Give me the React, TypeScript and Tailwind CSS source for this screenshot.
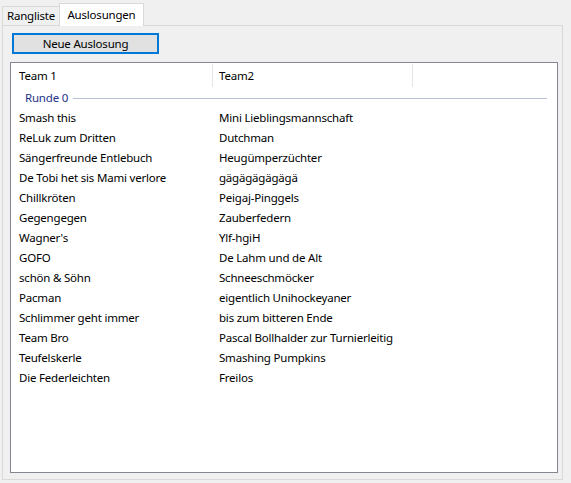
import React from "react";

const rows: [string, string][] = [
  ["Smash this", "Mini Lieblingsmannschaft"],
  ["ReLuk zum Dritten", "Dutchman"],
  ["Sängerfreunde Entlebuch", "Heugümperzüchter"],
  ["De Tobi het sis Mami verlore", "gägägägägägä"],
  ["Chillkröten", "Peigaj-Pinggels"],
  ["Gegengegen", "Zauberfedern"],
  ["Wagner's", "Ylf-hgiH"],
  ["GOFO", "De Lahm und de Alt"],
  ["schön & Söhn", "Schneeschmöcker"],
  ["Pacman", "eigentlich Unihockeyaner"],
  ["Schlimmer geht immer", "bis zum bitteren Ende"],
  ["Team Bro", "Pascal Bollhalder zur Turnierleitig"],
  ["Teufelskerle", "Smashing Pumpkins"],
  ["Die Federleichten", "Freilos"],
];

export default function App() {
  return (
    <div
      className="w-[571px] h-[483px] bg-[#f0f0f0] text-[11.5px] tracking-[-0.2px] text-black overflow-hidden"
      style={{ fontFamily: '"Noto Sans", sans-serif' }}
    >
      {/* tab strip */}
      <div className="h-[25px] flex items-end pl-[2px]">
        <div className="w-[58px] h-[19px] border-l border-t border-r border-[#d9d9d9] bg-[#f0f0f0] flex items-center justify-center leading-none">
          Rangliste
        </div>
        <div className="relative z-10 ml-[-1px] mb-[-1px] w-[85px] h-[23px] border-l border-t border-r border-[#d9d9d9] bg-white flex items-center justify-center leading-none pb-[1px]">
          Auslosungen
        </div>
      </div>
      {/* tab page */}
      <div className="ml-[2px] w-[561px] h-[455px] border border-[#d9d9d9] bg-[#f0f0f0] flex flex-col">
        <button className="ml-[9px] mt-[7px] w-[147px] h-[21px] border-2 border-[#0078d7] bg-[#e1e1e1] flex items-center justify-center leading-none">
          Neue Auslosung
        </button>
        <div className="ml-[7px] mt-[8px] w-[548px] h-[411px] border border-[#828790] bg-white flex flex-col">
          {/* header */}
          <div className="h-[25px] flex items-stretch">
            <div className="w-[201px] pl-[8px] flex items-center">Team 1</div>
            <div className="w-px my-[1px] bg-[#e5e5e5]" />
            <div className="w-[199px] pl-[6px] flex items-center">Team2</div>
            <div className="w-px my-[1px] bg-[#e5e5e5]" />
          </div>
          {/* group */}
          <div className="h-[20px] flex items-center pl-[14px] pr-[10px]">
            <span className="text-[#1e3287]">Runde 0</span>
            <div className="flex-1 ml-[5px] h-px bg-[#b7c1d8]" />
          </div>
          {rows.map(([a, b]) => (
            <div key={a} className="h-[20px] flex items-center">
              <div className="w-[208px] pl-[8px] whitespace-nowrap">{a}</div>
              <div className="whitespace-nowrap">{b}</div>
            </div>
          ))}
        </div>
      </div>
    </div>
  );
}
